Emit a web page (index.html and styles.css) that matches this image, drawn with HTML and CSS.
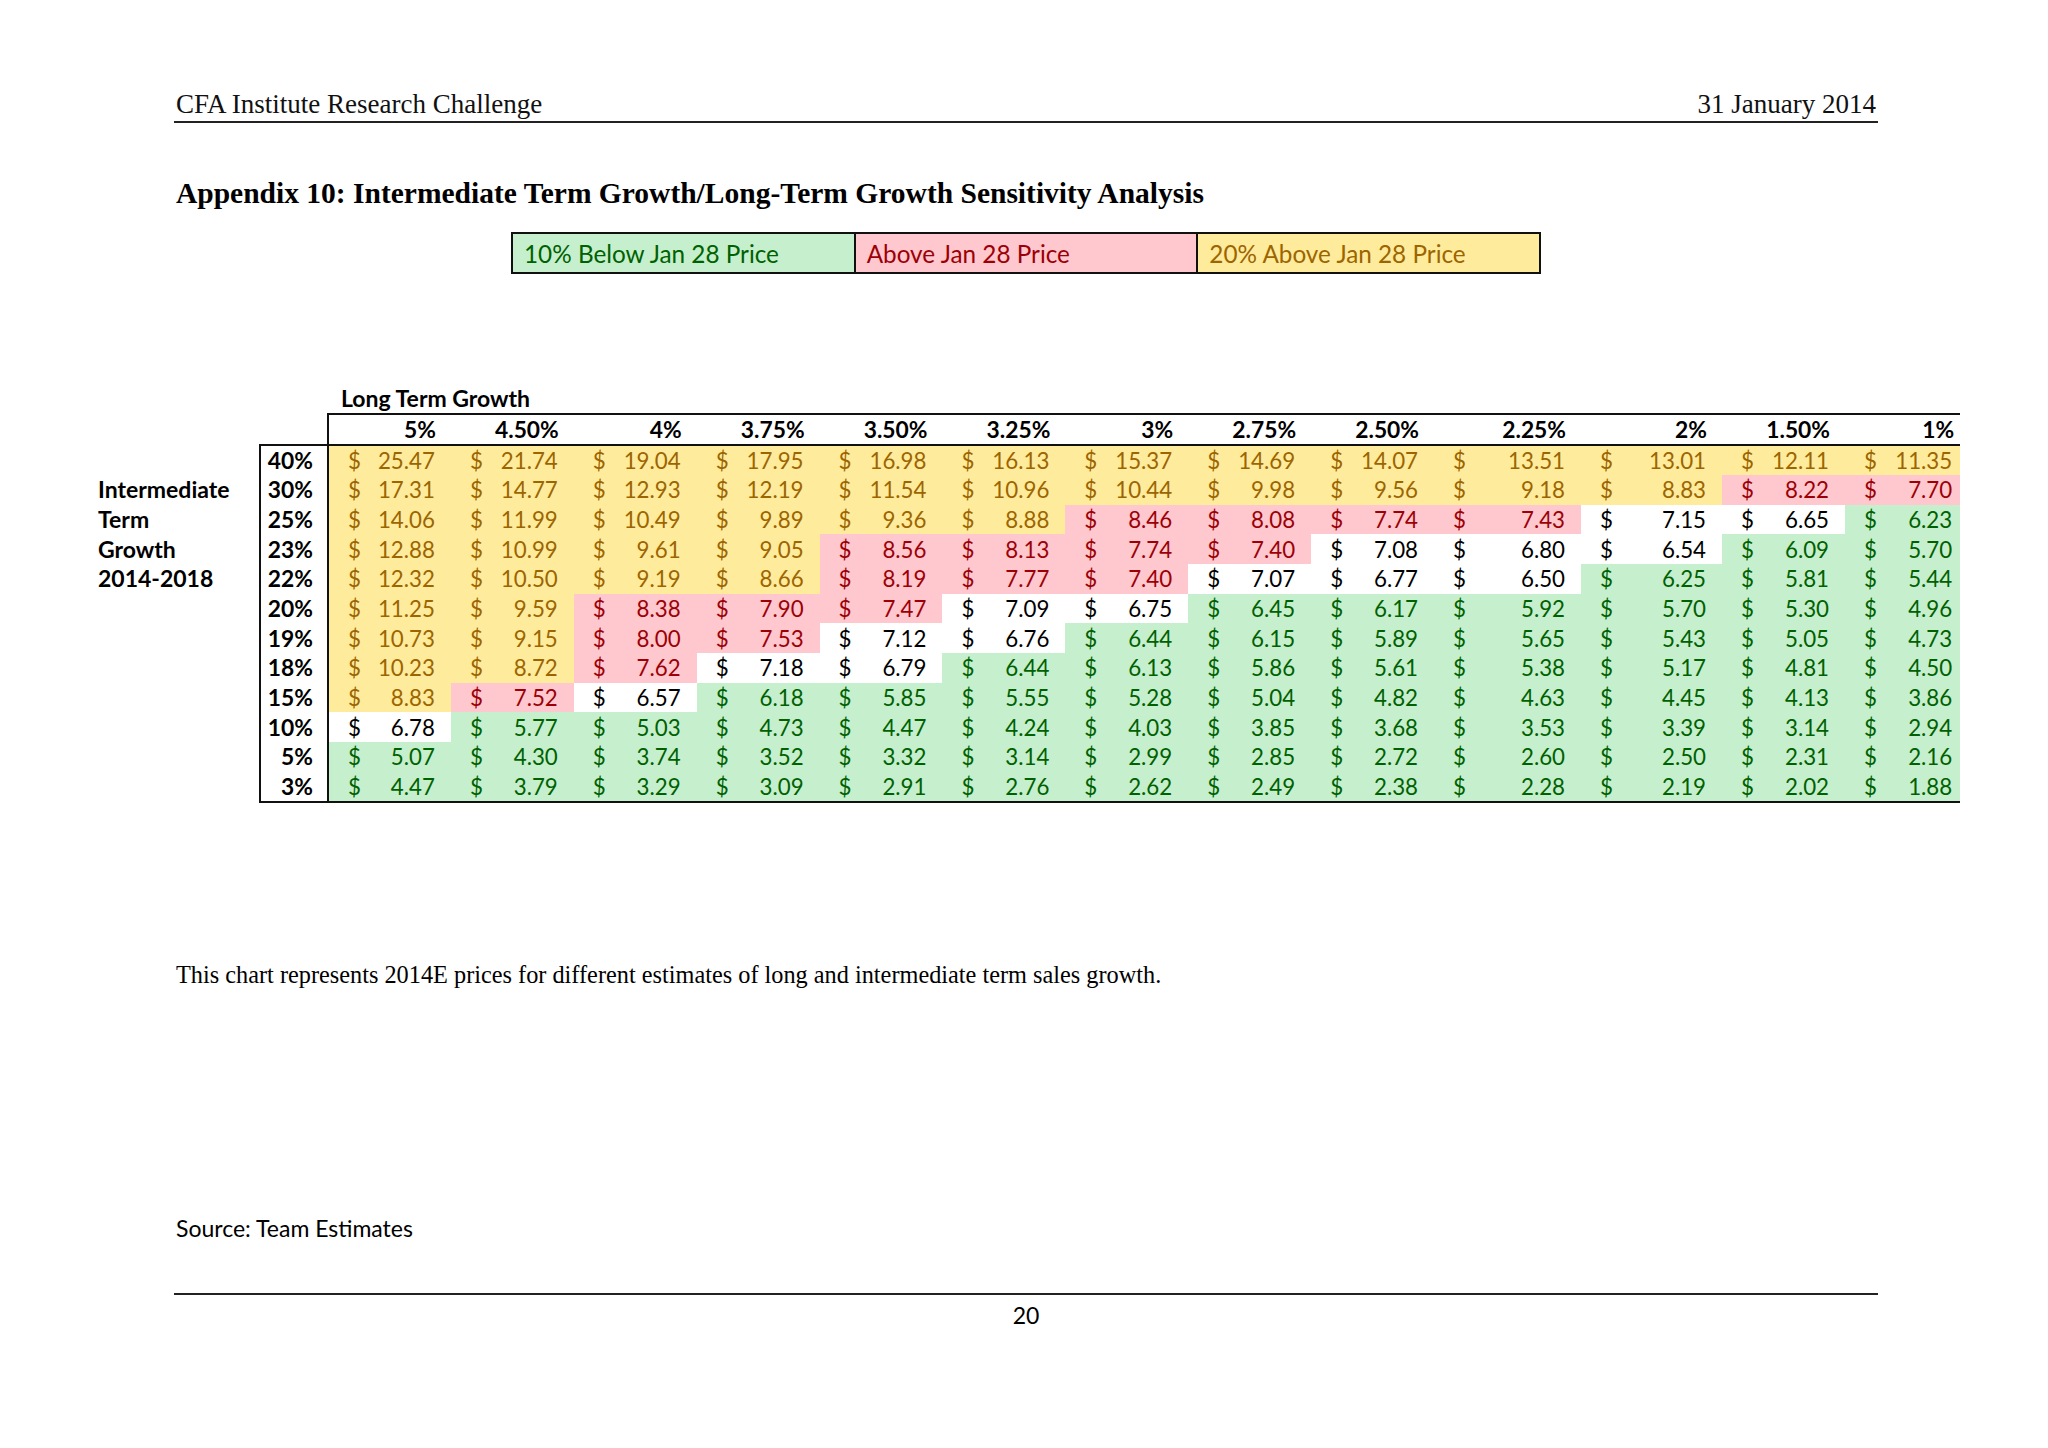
FILE: index.html
```html
<!DOCTYPE html>
<html lang="en">
<head>
<meta charset="utf-8">
<title>Appendix 10</title>
<link rel="stylesheet" href="styles.css">
</head>
<body>
<div class="page">
  <header class="top">
    <span>CFA Institute Research Challenge</span>
    <span>31 January 2014</span>
  </header>

  <h1 class="title">Appendix 10: Intermediate Term Growth/Long-Term Growth Sensitivity Analysis</h1>

  <div class="legend">
    <div class="lg g">10% Below Jan 28 Price</div>
    <div class="lg p">Above Jan 28 Price</div>
    <div class="lg y">20% Above Jan 28 Price</div>
  </div>

  <table class="sheet">
    <colgroup>
      <col class="c-side"><col class="c-lbl">
      <col class="c-n"><col class="c-n"><col class="c-n"><col class="c-n"><col class="c-n"><col class="c-n"><col class="c-n"><col class="c-n"><col class="c-n">
      <col class="c-10"><col class="c-11"><col class="c-12"><col class="c-13">
    </colgroup>
    <tr class="cap"><td></td><td></td><td colspan="13" class="ltg">Long Term Growth</td></tr>
    <tr class="hdr"><td></td><td class="corner"></td><th>5%</th><th>4.50%</th><th>4%</th><th>3.75%</th><th>3.50%</th><th>3.25%</th><th>3%</th><th>2.75%</th><th>2.50%</th><th>2.25%</th><th>2%</th><th>1.50%</th><th class="last">1%</th></tr>
    <tr><td class="side"></td><th class="rl">40%</th><td class="y"><span class="d">$</span>25.47</td><td class="y"><span class="d">$</span>21.74</td><td class="y"><span class="d">$</span>19.04</td><td class="y"><span class="d">$</span>17.95</td><td class="y"><span class="d">$</span>16.98</td><td class="y"><span class="d">$</span>16.13</td><td class="y"><span class="d">$</span>15.37</td><td class="y"><span class="d">$</span>14.69</td><td class="y"><span class="d">$</span>14.07</td><td class="y"><span class="d">$</span>13.51</td><td class="y"><span class="d">$</span>13.01</td><td class="y"><span class="d">$</span>12.11</td><td class="y last"><span class="d">$</span>11.35</td></tr>
    <tr><td class="side">Intermediate</td><th class="rl">30%</th><td class="y"><span class="d">$</span>17.31</td><td class="y"><span class="d">$</span>14.77</td><td class="y"><span class="d">$</span>12.93</td><td class="y"><span class="d">$</span>12.19</td><td class="y"><span class="d">$</span>11.54</td><td class="y"><span class="d">$</span>10.96</td><td class="y"><span class="d">$</span>10.44</td><td class="y"><span class="d">$</span>9.98</td><td class="y"><span class="d">$</span>9.56</td><td class="y"><span class="d">$</span>9.18</td><td class="y"><span class="d">$</span>8.83</td><td class="p"><span class="d">$</span>8.22</td><td class="p last"><span class="d">$</span>7.70</td></tr>
    <tr><td class="side">Term</td><th class="rl">25%</th><td class="y"><span class="d">$</span>14.06</td><td class="y"><span class="d">$</span>11.99</td><td class="y"><span class="d">$</span>10.49</td><td class="y"><span class="d">$</span>9.89</td><td class="y"><span class="d">$</span>9.36</td><td class="y"><span class="d">$</span>8.88</td><td class="p"><span class="d">$</span>8.46</td><td class="p"><span class="d">$</span>8.08</td><td class="p"><span class="d">$</span>7.74</td><td class="p"><span class="d">$</span>7.43</td><td class="w"><span class="d">$</span>7.15</td><td class="w"><span class="d">$</span>6.65</td><td class="g last"><span class="d">$</span>6.23</td></tr>
    <tr><td class="side">Growth</td><th class="rl">23%</th><td class="y"><span class="d">$</span>12.88</td><td class="y"><span class="d">$</span>10.99</td><td class="y"><span class="d">$</span>9.61</td><td class="y"><span class="d">$</span>9.05</td><td class="p"><span class="d">$</span>8.56</td><td class="p"><span class="d">$</span>8.13</td><td class="p"><span class="d">$</span>7.74</td><td class="p"><span class="d">$</span>7.40</td><td class="w"><span class="d">$</span>7.08</td><td class="w"><span class="d">$</span>6.80</td><td class="w"><span class="d">$</span>6.54</td><td class="g"><span class="d">$</span>6.09</td><td class="g last"><span class="d">$</span>5.70</td></tr>
    <tr><td class="side">2014-2018</td><th class="rl">22%</th><td class="y"><span class="d">$</span>12.32</td><td class="y"><span class="d">$</span>10.50</td><td class="y"><span class="d">$</span>9.19</td><td class="y"><span class="d">$</span>8.66</td><td class="p"><span class="d">$</span>8.19</td><td class="p"><span class="d">$</span>7.77</td><td class="p"><span class="d">$</span>7.40</td><td class="w"><span class="d">$</span>7.07</td><td class="w"><span class="d">$</span>6.77</td><td class="w"><span class="d">$</span>6.50</td><td class="g"><span class="d">$</span>6.25</td><td class="g"><span class="d">$</span>5.81</td><td class="g last"><span class="d">$</span>5.44</td></tr>
    <tr><td class="side"></td><th class="rl">20%</th><td class="y"><span class="d">$</span>11.25</td><td class="y"><span class="d">$</span>9.59</td><td class="p"><span class="d">$</span>8.38</td><td class="p"><span class="d">$</span>7.90</td><td class="p"><span class="d">$</span>7.47</td><td class="w"><span class="d">$</span>7.09</td><td class="w"><span class="d">$</span>6.75</td><td class="g"><span class="d">$</span>6.45</td><td class="g"><span class="d">$</span>6.17</td><td class="g"><span class="d">$</span>5.92</td><td class="g"><span class="d">$</span>5.70</td><td class="g"><span class="d">$</span>5.30</td><td class="g last"><span class="d">$</span>4.96</td></tr>
    <tr><td class="side"></td><th class="rl">19%</th><td class="y"><span class="d">$</span>10.73</td><td class="y"><span class="d">$</span>9.15</td><td class="p"><span class="d">$</span>8.00</td><td class="p"><span class="d">$</span>7.53</td><td class="w"><span class="d">$</span>7.12</td><td class="w"><span class="d">$</span>6.76</td><td class="g"><span class="d">$</span>6.44</td><td class="g"><span class="d">$</span>6.15</td><td class="g"><span class="d">$</span>5.89</td><td class="g"><span class="d">$</span>5.65</td><td class="g"><span class="d">$</span>5.43</td><td class="g"><span class="d">$</span>5.05</td><td class="g last"><span class="d">$</span>4.73</td></tr>
    <tr><td class="side"></td><th class="rl">18%</th><td class="y"><span class="d">$</span>10.23</td><td class="y"><span class="d">$</span>8.72</td><td class="p"><span class="d">$</span>7.62</td><td class="w"><span class="d">$</span>7.18</td><td class="w"><span class="d">$</span>6.79</td><td class="g"><span class="d">$</span>6.44</td><td class="g"><span class="d">$</span>6.13</td><td class="g"><span class="d">$</span>5.86</td><td class="g"><span class="d">$</span>5.61</td><td class="g"><span class="d">$</span>5.38</td><td class="g"><span class="d">$</span>5.17</td><td class="g"><span class="d">$</span>4.81</td><td class="g last"><span class="d">$</span>4.50</td></tr>
    <tr><td class="side"></td><th class="rl">15%</th><td class="y"><span class="d">$</span>8.83</td><td class="p"><span class="d">$</span>7.52</td><td class="w"><span class="d">$</span>6.57</td><td class="g"><span class="d">$</span>6.18</td><td class="g"><span class="d">$</span>5.85</td><td class="g"><span class="d">$</span>5.55</td><td class="g"><span class="d">$</span>5.28</td><td class="g"><span class="d">$</span>5.04</td><td class="g"><span class="d">$</span>4.82</td><td class="g"><span class="d">$</span>4.63</td><td class="g"><span class="d">$</span>4.45</td><td class="g"><span class="d">$</span>4.13</td><td class="g last"><span class="d">$</span>3.86</td></tr>
    <tr><td class="side"></td><th class="rl">10%</th><td class="w"><span class="d">$</span>6.78</td><td class="g"><span class="d">$</span>5.77</td><td class="g"><span class="d">$</span>5.03</td><td class="g"><span class="d">$</span>4.73</td><td class="g"><span class="d">$</span>4.47</td><td class="g"><span class="d">$</span>4.24</td><td class="g"><span class="d">$</span>4.03</td><td class="g"><span class="d">$</span>3.85</td><td class="g"><span class="d">$</span>3.68</td><td class="g"><span class="d">$</span>3.53</td><td class="g"><span class="d">$</span>3.39</td><td class="g"><span class="d">$</span>3.14</td><td class="g last"><span class="d">$</span>2.94</td></tr>
    <tr><td class="side"></td><th class="rl">5%</th><td class="g"><span class="d">$</span>5.07</td><td class="g"><span class="d">$</span>4.30</td><td class="g"><span class="d">$</span>3.74</td><td class="g"><span class="d">$</span>3.52</td><td class="g"><span class="d">$</span>3.32</td><td class="g"><span class="d">$</span>3.14</td><td class="g"><span class="d">$</span>2.99</td><td class="g"><span class="d">$</span>2.85</td><td class="g"><span class="d">$</span>2.72</td><td class="g"><span class="d">$</span>2.60</td><td class="g"><span class="d">$</span>2.50</td><td class="g"><span class="d">$</span>2.31</td><td class="g last"><span class="d">$</span>2.16</td></tr>
    <tr class="end"><td class="side"></td><th class="rl">3%</th><td class="g"><span class="d">$</span>4.47</td><td class="g"><span class="d">$</span>3.79</td><td class="g"><span class="d">$</span>3.29</td><td class="g"><span class="d">$</span>3.09</td><td class="g"><span class="d">$</span>2.91</td><td class="g"><span class="d">$</span>2.76</td><td class="g"><span class="d">$</span>2.62</td><td class="g"><span class="d">$</span>2.49</td><td class="g"><span class="d">$</span>2.38</td><td class="g"><span class="d">$</span>2.28</td><td class="g"><span class="d">$</span>2.19</td><td class="g"><span class="d">$</span>2.02</td><td class="g last"><span class="d">$</span>1.88</td></tr>
  </table>

  <p class="para">This chart represents 2014E prices for different estimates of long and intermediate term sales growth.</p>

  <p class="source">Source: Team Estimates</p>

  <footer class="foot">20</footer>
</div>
</body>
</html>
```

FILE: styles.css
```css
html, body {
  margin: 0;
  padding: 0;
  background: #ffffff;
}

body {
  color: #000;
  font-family: "Lato", "Liberation Sans", sans-serif;
}

.page {
  width: 1704px;
  margin-left: 174px;
}

.top {
  display: flex;
  justify-content: space-between;
  padding: 89px 2px 2px;
  border-bottom: 2px solid #222;
  font-family: "Liberation Serif", serif;
  font-size: 27px;
  line-height: 30px;
  color: #111;
}

.title {
  margin: 53px 0 0;
  padding-left: 2px;
  font-family: "Liberation Serif", serif;
  font-weight: bold;
  font-size: 29.5px;
  line-height: 34px;
  color: #000;
}

.legend {
  display: flex;
  box-sizing: border-box;
  width: 1030px;
  height: 42px;
  margin: 22px 0 0 337px;
  border: 2px solid #111;
}

.lg {
  flex: 1;
  padding: 3px 0 0 11px;
  font-size: 24.3px;
  line-height: 34px;
}

.lg + .lg {
  border-left: 2px solid #111;
}

.g { background: #c6efce; color: #006100; }
.p { background: #ffc7ce; color: #9c0006; }
.y { background: #ffeb9c; color: #9c6500; }
.w { background: #ffffff; color: #000000; }

.sheet {
  margin: 106.5px 0 0 -76px;
  border-collapse: collapse;
  table-layout: fixed;
  width: 1862px;
  font-size: 22.3px;
}

.c-side { width: 162px; }
.c-lbl { width: 68px; }
.c-n { width: 122.9px; }
.c-10 { width: 147px; }
.c-11 { width: 141px; }
.c-12 { width: 123px; }
.c-13 { width: 115px; }

.sheet td,
.sheet th {
  padding: 0 16px 0 19px;
  height: 29.67px;
  line-height: 29px;
  text-align: right;
  white-space: nowrap;
  vertical-align: middle;
}

.sheet .d {
  float: left;
}

.sheet tr.cap td {
  height: 29px;
  line-height: 26px;
  padding: 3px 0 0;
}

.sheet tr.cap td.ltg {
  text-align: left;
  padding-left: 13px;
  font-weight: bold;
  font-size: 23px;
}

.sheet tr.hdr th {
  height: 29px;
  padding-right: 15px;
  font-weight: bold;
  font-size: 22.8px;
  border-top: 2px solid #111;
  border-bottom: 2px solid #111;
}

.sheet tr.hdr .corner {
  border-right: 2px solid #111;
  border-bottom: 2px solid #111;
}

.sheet .side {
  text-align: left;
  padding: 0;
  font-weight: bold;
  font-size: 23px;
}

.sheet .rl {
  padding: 0 14px 0 0;
  font-weight: bold;
  font-size: 22.8px;
  border-left: 2px solid #111;
  border-right: 2px solid #111;
}

.sheet tr.end td:not(.side),
.sheet tr.end th {
  border-bottom: 2px solid #111;
}

.sheet .last {
  padding-right: 8px;
}

.sheet tr.hdr th.last {
  padding-right: 6px;
}

.para {
  margin: 157px 0 0;
  padding-left: 2px;
  font-family: "Liberation Serif", serif;
  font-size: 24.3px;
  line-height: 30px;
}

.source {
  margin: 224px 0 0;
  padding-left: 2px;
  font-size: 23px;
  line-height: 28px;
}

.foot {
  margin-top: 51px;
  padding-top: 6px;
  border-top: 2px solid #222;
  text-align: center;
  font-size: 23px;
  line-height: 28px;
}
```
